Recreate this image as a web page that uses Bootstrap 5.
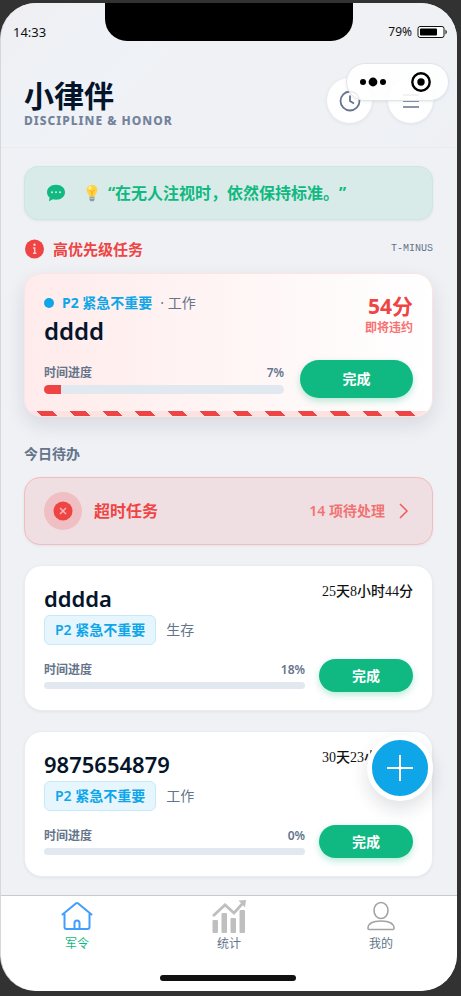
<!DOCTYPE html>
<html lang="zh-CN">
<head>
<meta charset="utf-8">
<meta name="viewport" content="width=device-width, initial-scale=1">
<title>小律伴</title>
<link href="https://cdn.jsdelivr.net/npm/bootstrap@5.3.0/dist/css/bootstrap.min.css" rel="stylesheet">
<style>
:root{--ink:#04152b;--slate:#64748b;--red:#ef4444;--green:#10b981;--sky:#0ea5e9}
body{background:#323232;font-family:"Noto Sans","Noto Sans CJK SC",sans-serif;color:var(--ink);padding:3px 4px 5px 0}
.phone{min-height:calc(100vh - 8px);border-radius:36px;border-left:1px solid #d6d7da;background:#f0f1f5}
.topzone{background:linear-gradient(135deg,#f0eff3 0,#eef2f6 25%,#f0f1f5 45%,#f0f1f5 75%,#eef1f5 90%,#f0eff3 100%);border-bottom:1px solid #e9ebef}
.statusbar{padding:20px 9px 0 12px;line-height:18px;font-size:13px;color:#111}
.statusbar .pct{font-size:12px}
.notch{width:248px;height:38px;top:0;left:104px;border-radius:0 0 22px 22px;background:#000}
.brand{padding:37px 24px 19px 23px}
.brand h1{font-size:30px;line-height:36px;font-weight:700}
.brand p{font-size:12px;line-height:14px;font-weight:800;color:#74839b;letter-spacing:1px}
.roundbtn{width:45px;height:45px;background:#fff;box-shadow:0 1px 4px rgba(30,41,59,.08)}
.capsule{width:103px;height:38px;top:60px;right:8px;border-radius:19px;background:rgba(255,255,255,.88);border:1px solid #e3e4e7;box-shadow:0 1px 3px rgba(0,0,0,.07);z-index:2}
.content{padding:18px 24px 18px 23px}
.quote{height:54px;border:1px solid #c9e8df;border-radius:14px;background:#d9ebe8;color:var(--green);font-size:16px;font-weight:700;padding:0 21px;box-shadow:0 1px 3px rgba(15,23,42,.06);text-spacing-trim:space-all}
.sect{margin:18px 0 13px;line-height:22px}
.sect h2{font-size:15px;line-height:22px;font-weight:600;color:var(--red)}
.tminus{font:10px/14px "Liberation Mono",monospace;color:var(--slate)}
.urgent{border:1px solid #fde3e3;border-radius:18px;background:linear-gradient(90deg,#ffebeb,#fff);padding:18px 19px 18px;box-shadow:0 8px 20px rgba(15,23,42,.11)}
.stripes{height:5px;background:repeating-linear-gradient(45deg,#fee2e2 0 12px,var(--red) 12px 23px)}
.t14{font-size:14px;line-height:22px}
.t12{font-size:12px;line-height:16px}
.semi{font-weight:600}
.sky{color:var(--sky)}.slate{color:var(--slate)}
.dot{width:10px;height:10px;background:var(--sky)}
.bigname{font-size:24px;line-height:34px;font-weight:600}
.left{font-size:21px;line-height:28px;font-weight:700;color:var(--red)}
.soon{color:#f87171;font-weight:600}
.track{height:9px;background:#e2e8f0;border-radius:5px}
.track .progress-bar{background:var(--red)}
.track.slim{height:7px}
.done{border:0;border-radius:20px;background:var(--green);color:#fff;font-size:14px;line-height:20px;font-weight:700;width:113px;height:38px;box-shadow:0 3px 7px rgba(16,185,129,.3)}
.done.slim{width:94px;height:33px}
.today{margin:26px 0 12px;font-size:14px;line-height:22px;font-weight:600;color:var(--slate)}
.overdue{height:68px;border:1px solid #f3bcc0;border-radius:16px;background:#f0dfe2;padding:0 19px;box-shadow:0 1px 3px rgba(15,23,42,.06)}
.halo{width:38px;height:38px;background:#f0bfc3}
.overdue h3{font-size:16px;line-height:24px;font-weight:600;color:var(--red)}
.count{color:#f07373;font-weight:600}
.task{margin-top:20px;border:1px solid #e9ecf1;border-radius:18px;background:#fff;padding:15px 19px 18px;box-shadow:0 1px 3px rgba(15,23,42,.06)}
.task h3{font-size:22px;line-height:34px;font-weight:600}
.meter{margin-top:14px;gap:14px}
.tagrow{gap:10px}
.remain{font:14px/22px "Liberation Serif","Noto Sans CJK SC",serif;font-weight:500;color:#111}
.prio{height:30px;padding:0 10px;border:1px solid #c3e9fa;border-radius:6px;background:#e7f6fd;color:var(--sky);font-size:14px;line-height:28px;font-weight:600}
.tabs{border-top:1px solid #c9cbca;height:96px;border-radius:0 0 36px 36px;background:#fff}
.tabs a{font-size:12px;line-height:16px;color:var(--slate);text-decoration:none;padding-top:4px}
.tabs a.on{color:var(--green)}
.homebar{width:136px;height:6px;bottom:10px;left:159px;border-radius:3px;background:#111}
.fab{width:66px;height:66px;right:24px;bottom:190px;border:5px solid #fff;background:var(--sky);box-shadow:0 8px 18px rgba(15,23,42,.13);z-index:2}
</style>
<script src="https://cdn.jsdelivr.net/npm/bootstrap@5.3.0/dist/js/bootstrap.bundle.min.js"></script>
</head>
<body>
<div class="phone position-relative overflow-hidden d-flex flex-column">
  <header class="topzone">
    <div class="notch position-absolute"></div>
    <div class="statusbar d-flex justify-content-between">
      <span>14:33</span>
      <span class="d-flex align-items-center gap-1"><span class="pct">79%</span>
        <svg width="32" height="14" viewBox="0 0 32 14"><rect x="2" y="1.5" width="26" height="11" rx="2" fill="#fff" stroke="#111"/><rect x="4" y="3.500" width="17" height="7" rx="1"/><path d="M29.500 4.500q2.500 2.500 0 5z"/></svg></span>
    </div>
    <div class="brand d-flex justify-content-between align-items-start">
      <div><h1 class="m-0">小律伴</h1><p class="m-0">DISCIPLINE &amp; HONOR</p></div>
      <div class="d-flex gap-3">
        <button class="roundbtn btn rounded-circle p-0" aria-label="历史"><svg width="24" height="24" viewBox="0 0 24 24" fill="none" stroke="#64748b" stroke-width="1.800"><circle cx="12" cy="12" r="9.500"/><path d="M12 6.500V12l4 2.500"/></svg></button>
        <button class="roundbtn btn rounded-circle p-0" aria-label="菜单"><svg width="24" height="24" viewBox="0 0 24 24" stroke="#64748b" stroke-width="1.500"><path d="M4 6h16M4 12h16M4 18h16"/></svg></button>
      </div>
    </div>
    <div class="capsule position-absolute d-flex align-items-center justify-content-between px-2">
      <svg class="ms-1" width="28" height="12" viewBox="0 0 28 12"><circle cx="4" cy="6" r="3"/><circle cx="14" cy="6" r="4.400"/><circle cx="24" cy="6" r="3"/></svg>
      <svg class="me-2" width="22" height="22" viewBox="0 0 22 22"><circle cx="11" cy="11" r="8.700" fill="none" stroke="#000" stroke-width="2.400"/><circle cx="11" cy="11" r="3.700"/></svg>
    </div>
  </header>

  <main class="content flex-grow-1">
    <div class="quote d-flex align-items-center">
      <svg width="20" height="18" viewBox="0 0 20 18"><path d="M10 .8C4.700.8 1 4 1 8.200c0 2.200 1 4 2.600 5.300L2.900 17.300l4-2c1 .2 2 .4 3.100.4 5.300 0 9-3.300 9-7.500S15.300.8 10 .8z" fill="#10b981"/><g fill="#d9ebe8"><circle cx="6" cy="8.200" r="1"/><circle cx="10" cy="8.200" r="1"/><circle cx="14" cy="8.200" r="1"/></g></svg>
      <svg class="ms-3 me-2" width="18" height="18" viewBox="0 0 18 18"><g transform="translate(4 0)"><path d="M6 1C2.800 1 .6 3.200.6 6.100c0 2.600 2.300 3.900 2.700 6.600h5.400c.4-2.700 2.700-4 2.700-6.600C11.400 3.200 9.200 1 6 1z" fill="#ffd23e"/><path d="M3.500 5.500 6 8.500l2.500-3M6 8v4" fill="none" stroke="#f5a91c"/><ellipse cx="4" cy="4" rx="1.500" ry="2" fill="#fff0a0"/><path d="M3.500 12.700h5v3.200l-1.200 1.300H4.700l-1.200-1.300z" fill="#8e99a3"/><path d="M3.500 14.300h5" stroke="#c5cbd0"/></g></svg>
      <span class="text-nowrap">“在无人注视时，依然保持标准。”</span>
    </div>

    <div class="sect d-flex justify-content-between align-items-center">
      <div class="d-flex align-items-center gap-2">
        <svg width="21" height="20" viewBox="0 0 21 20"><circle cx="10.500" cy="10" r="9.500" fill="#ef4444"/><circle cx="10.500" cy="5.800" r="1.200" fill="#fcc"/><path d="M9 9h1.700v5M9 14.200h3.400" fill="none" stroke="#fcc" stroke-width="1.400"/></svg>
        <h2 class="m-0">高优先级任务</h2>
      </div>
      <span class="tminus">T-MINUS</span>
    </div>

    <section class="urgent position-relative overflow-hidden">
      <div class="d-flex justify-content-between">
        <div>
          <div class="d-flex align-items-center gap-2 t14"><span class="dot rounded-circle"></span><span class="fw-bold sky">P2 紧急不重要</span><span class="slate">· 工作</span></div>
          <div class="bigname">dddd</div>
        </div>
        <div class="text-end"><div class="left">54分</div><div class="soon t12">即将违约</div></div>
      </div>
      <div class="d-flex align-items-center mt-2 pt-1">
        <div class="flex-grow-1 me-3">
          <div class="d-flex justify-content-between t12 slate semi mb-1"><span>时间进度</span><span>7%</span></div>
          <div class="progress track"><div class="progress-bar" style="width:7%"></div></div>
        </div>
        <button class="done">完成</button>
      </div>
      <div class="stripes position-absolute bottom-0 start-0 end-0"></div>
    </section>

    <h2 class="today">今日待办</h2>

    <a href="#" class="overdue d-flex align-items-center text-decoration-none">
      <span class="halo rounded-circle d-flex align-items-center justify-content-center"><svg width="20" height="20" viewBox="0 0 20 20"><circle cx="10" cy="10" r="9.500" fill="#ef4444"/><path d="m7 7 6 6m0-6-6 6" stroke="#f6b5b8" stroke-width="1.500"/></svg></span>
      <h3 class="m-0 ms-2 ps-1 flex-grow-1">超时任务</h3>
      <span class="count t14">14 项待处理</span>
      <svg class="ms-2" width="20" height="20" viewBox="0 0 20 20" fill="none" stroke="#ef5a5a" stroke-width="1.500"><path d="m7 3 7 7-7 7"/></svg>
    </a>

    <article class="task">
      <div class="d-flex justify-content-between"><h3 class="m-0">dddda</h3><span class="remain">25天8小时44分</span></div>
      <div class="tagrow d-flex align-items-center"><span class="prio">P2 紧急不重要</span><span class="t14 slate">生存</span></div>
      <div class="meter d-flex align-items-center">
        <div class="flex-grow-1">
          <div class="d-flex justify-content-between t12 slate semi mb-1"><span>时间进度</span><span>18%</span></div>
          <div class="progress track slim"></div>
        </div>
        <button class="done slim">完成</button>
      </div>
    </article>

    <article class="task">
      <div class="d-flex justify-content-between"><h3 class="m-0">9875654879</h3><span class="remain">30天23小时1分</span></div>
      <div class="tagrow d-flex align-items-center"><span class="prio">P2 紧急不重要</span><span class="t14 slate">工作</span></div>
      <div class="meter d-flex align-items-center">
        <div class="flex-grow-1">
          <div class="d-flex justify-content-between t12 slate semi mb-1"><span>时间进度</span><span>0%</span></div>
          <div class="progress track slim"></div>
        </div>
        <button class="done slim">完成</button>
      </div>
    </article>
  </main>

  <button class="fab position-absolute rounded-circle p-0 d-flex align-items-center justify-content-center" aria-label="新建任务"><svg width="28" height="28" viewBox="0 0 28 28" stroke="#fff" stroke-width="2"><path d="M14 1v26M1 14h26"/></svg></button>

  <nav class="tabs d-flex position-relative">
    <a href="#" class="on d-flex flex-column align-items-center flex-fill w-100"><svg width="34" height="36" viewBox="0 0 34 36" fill="none" stroke="#409eff" stroke-width="2" stroke-linejoin="round" stroke-linecap="round"><path d="M2.500 14.500 15.800 3.500q1.200-1 2.400 0L31.500 14.500M4.500 13v14q0 2 2 2h21q2 0 2-2V13M14.500 29v-6q0-2.500 2.500-2.500t2.500 2.500v6"/></svg>军令</a>
    <a href="#" class="d-flex flex-column align-items-center flex-fill w-100"><svg width="36" height="36" viewBox="0 0 36 36" fill="#bfbfbf"><rect x="1.500" y="20" width="5.500" height="13" rx="1"/><rect x="10.500" y="13" width="5.500" height="20" rx="1"/><rect x="19.500" y="18" width="5.500" height="15" rx="1"/><rect x="28.500" y="10" width="5.500" height="23" rx="1"/><path d="M2 16 14 5l9 8L32 3" fill="none" stroke="#bfbfbf" stroke-width="2.800"/><path d="M27.500.500 35 0l-1 7.500z"/></svg>统计</a>
    <a href="#" class="d-flex flex-column align-items-center flex-fill w-100"><svg width="34" height="36" viewBox="0 0 34 36" fill="none" stroke="#a3a3a3" stroke-width="1.600"><ellipse cx="17" cy="10.500" rx="7" ry="8"/><path d="M5 29.500q-1 0-1-1C4 23.500 9.500 21 17 21s13 2.500 13 7.500q0 1-1 1z" stroke-linejoin="round"/></svg>我的</a>
    <span class="homebar position-absolute"></span>
  </nav>
</div>
</body>
</html>
